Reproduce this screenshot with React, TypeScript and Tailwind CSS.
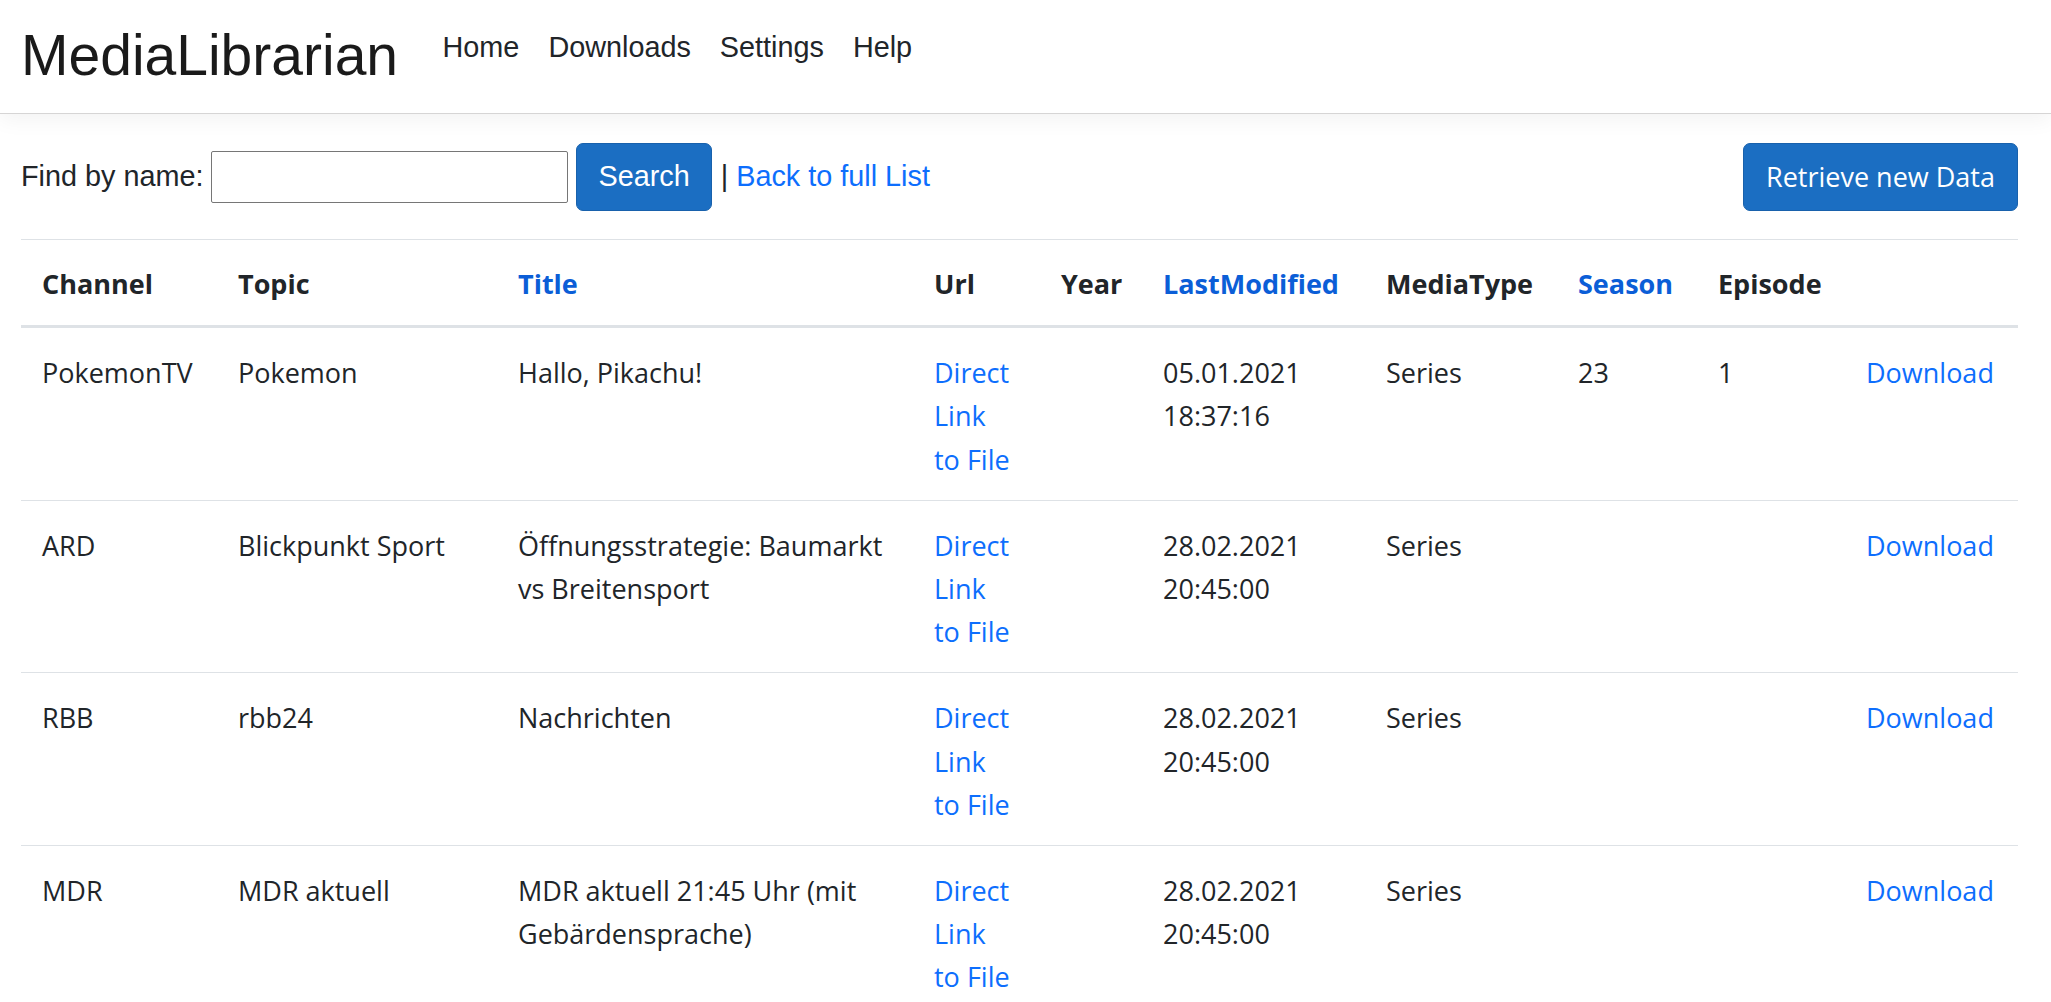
import React from 'react';

const rows = [
  {
    channel: 'PokemonTV',
    topic: 'Pokemon',
    title: 'Hallo, Pikachu!',
    date: '05.01.2021',
    time: '18:37:16',
    mediaType: 'Series',
    season: '23',
    episode: '1',
  },
  {
    channel: 'ARD',
    topic: 'Blickpunkt Sport',
    title: 'Öffnungsstrategie: Baumarkt vs Breitensport',
    date: '28.02.2021',
    time: '20:45:00',
    mediaType: 'Series',
    season: '',
    episode: '',
  },
  {
    channel: 'RBB',
    topic: 'rbb24',
    title: 'Nachrichten',
    date: '28.02.2021',
    time: '20:45:00',
    mediaType: 'Series',
    season: '',
    episode: '',
  },
  {
    channel: 'MDR',
    topic: 'MDR aktuell',
    title: 'MDR aktuell 21:45 Uhr (mit Gebärdensprache)',
    date: '28.02.2021',
    time: '20:45:00',
    mediaType: 'Series',
    season: '',
    episode: '',
  },
];

const columns = [
  { label: 'Channel', width: 196, link: false },
  { label: 'Topic', width: 280, link: false },
  { label: 'Title', width: 416, link: true },
  { label: 'Url', width: 127, link: false },
  { label: 'Year', width: 102, link: false },
  { label: 'LastModified', width: 223, link: true },
  { label: 'MediaType', width: 192, link: false },
  { label: 'Season', width: 140, link: true },
  { label: 'Episode', width: 148, link: false },
  { label: '', width: 173, link: false },
];

const arial = "font-['Liberation_Sans',Arial,Helvetica,sans-serif]";

export default function App() {
  return (
    <div className="min-h-screen bg-white text-[#212529]">
      <header
        className={`relative z-10 flex h-[114px] items-center border-b border-[#d6d5d5] bg-white pl-[21px] shadow-[0_6px_20px_rgba(0,0,0,0.05)] ${arial}`}
      >
        <a href="#" className="mr-[30px] text-[57px] leading-none text-[#1a1a1a] -mt-[2px]">
          MediaLibrarian
        </a>
        <nav className="-mt-[18px] flex">
          {['Home', 'Downloads', 'Settings', 'Help'].map((item) => (
            <a
              key={item}
              href="#"
              className="px-[14.5px] text-[28.8px] leading-[43.2px] text-[#212529]"
            >
              {item}
            </a>
          ))}
        </nav>
      </header>

      <main className="pl-[21px] pr-[33px] pt-[29px]">
        <div className={`flex items-center justify-between ${arial} text-[28.8px] leading-[43.2px]`}>
          <div className="flex items-center">
            <span>Find by name:</span>
            <input
              type="text"
              className="ml-[8px] h-[52px] w-[357px] rounded-[2px] border border-[#767676] px-[4px] outline-none"
            />
            <button
              type="button"
              className="ml-[8px] h-[68px] rounded-[7px] border border-[#1861ac] bg-[#1b6ec2] px-[21px] text-white"
            >
              Search
            </button>
            <span className="ml-[9px]">|</span>
            <a href="#" className="ml-[8px] text-[#0d6efd]">
              Back to full List
            </a>
          </div>
          <button
            type="button"
            className="h-[68px] rounded-[7px] border border-[#1861ac] bg-[#1b6ec2] px-[22px] font-['Open_Sans',sans-serif] text-[27px] text-white"
          >
            Retrieve new Data
          </button>
        </div>

        <table className="mt-[28px] w-full table-fixed border-collapse font-['Open_Sans',sans-serif] text-[27px] leading-[43.2px]">
          <colgroup>
            {columns.map((c, i) => (
              <col key={i} style={{ width: c.width }} />
            ))}
          </colgroup>
          <thead>
            <tr className="border-t border-b-[3px] border-t-[#dee2e6] border-b-[#dee2e6]">
              {columns.map((c, i) => (
                <th
                  key={i}
                  className={`px-[21px] pb-[20px] pt-[22px] text-left align-bottom font-bold ${
                    c.link ? 'text-[#0b5ed7]' : 'text-[#212529]'
                  }`}
                >
                  {c.link ? <a href="#">{c.label}</a> : c.label}
                </th>
              ))}
            </tr>
          </thead>
          <tbody>
            {rows.map((r) => (
              <tr key={r.title} className="border-t border-[#dee2e6] align-top">
                <td className="px-[21px] pb-[19px] pt-[23px]">{r.channel}</td>
                <td className="px-[21px] pb-[19px] pt-[23px]">{r.topic}</td>
                <td className="px-[21px] pb-[19px] pt-[23px]">{r.title}</td>
                <td className="px-[21px] pb-[19px] pt-[23px]">
                  <a href="#" className="block max-w-[80px] text-[#0d6efd]">
                    Direct Link to File
                  </a>
                </td>
                <td className="px-[21px] pb-[19px] pt-[23px]"></td>
                <td className="px-[21px] pb-[19px] pt-[23px]">
                  {r.date}
                  <br />
                  {r.time}
                </td>
                <td className="px-[21px] pb-[19px] pt-[23px]">{r.mediaType}</td>
                <td className="px-[21px] pb-[19px] pt-[23px]">{r.season}</td>
                <td className="px-[21px] pb-[19px] pt-[23px]">{r.episode}</td>
                <td className="px-[21px] pb-[19px] pt-[23px]">
                  <a href="#" className="text-[#0d6efd]">
                    Download
                  </a>
                </td>
              </tr>
            ))}
          </tbody>
        </table>
      </main>
    </div>
  );
}
